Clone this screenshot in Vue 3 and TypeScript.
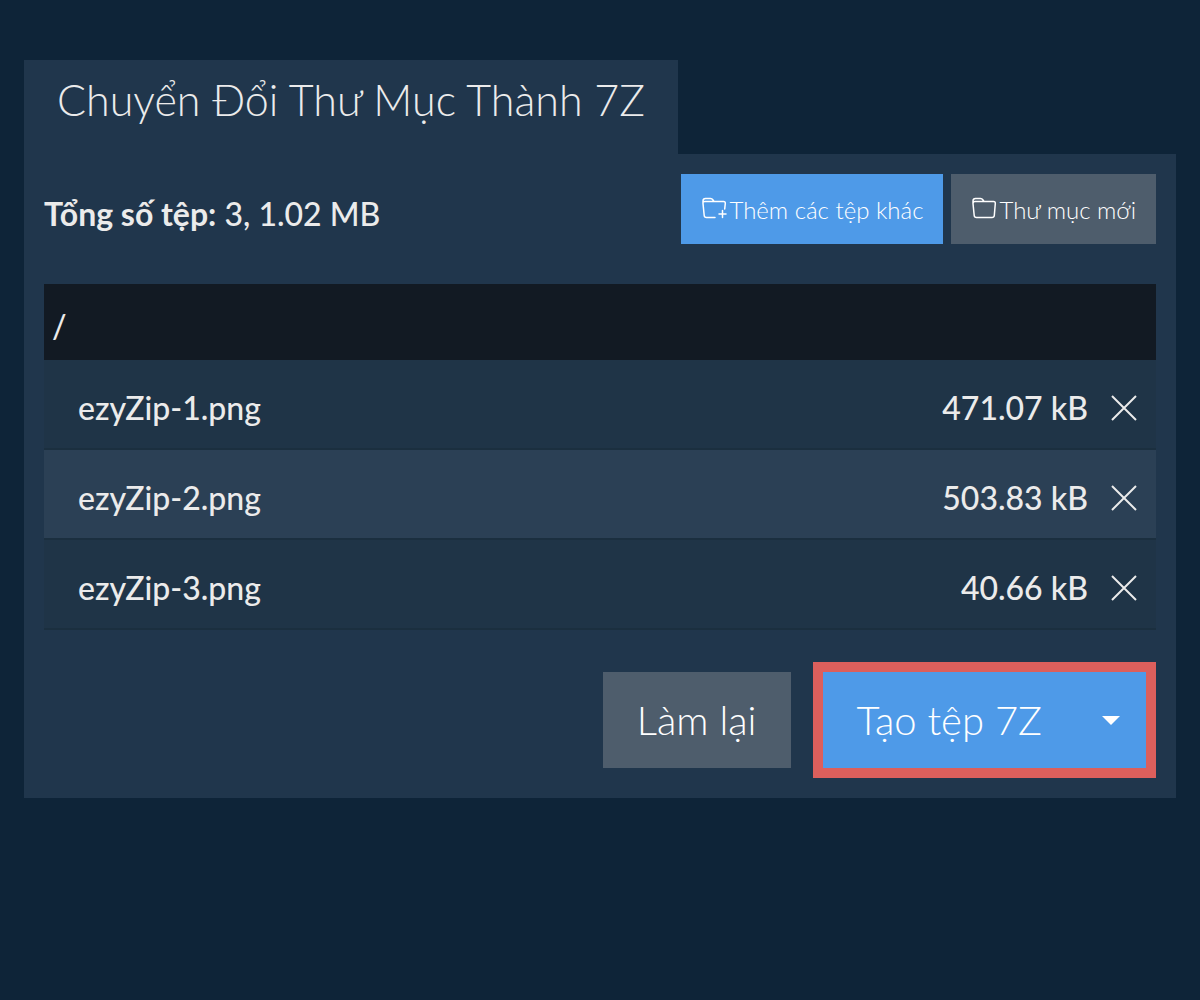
<script setup lang="ts">
import { ref, computed } from 'vue'

interface FileEntry {
  name: string
  size: string
}

const initialFiles: FileEntry[] = [
  { name: 'ezyZip-1.png', size: '471.07 kB' },
  { name: 'ezyZip-2.png', size: '503.83 kB' },
  { name: 'ezyZip-3.png', size: '40.66 kB' },
]

const files = ref<FileEntry[]>([...initialFiles])

const totalSize = computed(() => {
  const kb = files.value.reduce((sum, file) => sum + parseFloat(file.size), 0)
  return `${(kb / 1000).toFixed(2)} MB`
})

function removeFile(name: string) {
  files.value = files.value.filter((file) => file.name !== name)
}

function reset() {
  files.value = []
}
</script>

<template>
  <main class="page">
    <h1 class="tab">Chuyển Đổi Thư Mục Thành 7Z</h1>
    <section class="panel">
      <header class="toolbar">
        <p class="summary"><strong>Tổng số tệp:</strong> {{ files.length }}, {{ totalSize }}</p>
        <div class="tools">
          <button type="button" class="btn small primary">
            <svg class="icon" viewBox="0 0 26 24" aria-hidden="true">
              <path d="M14 20.500H5.500Q3.400 20.500 3.200 18.500L2 6.500V4Q2 1.500 4.500 1.500H9.500Q11 1.500 12 3L13 4.500H22.500Q24.500 4.500 24.300 6.500L23.700 12M2 5Q2.500 4.500 4 4.500H13M21.500 13.500V20.500M18 17H25" />
            </svg>
            <span>Thêm các tệp khác</span>
          </button>
          <button type="button" class="btn small muted">
            <svg class="icon" viewBox="0 0 26 24" aria-hidden="true">
              <path d="M2 6.500V4Q2 1.500 4.500 1.500H9.500Q11 1.500 12 3L13 4.500H22.500Q24.500 4.500 24.300 6.500L23.300 18.500Q23.100 20.500 21 20.500H5.500Q3.400 20.500 3.200 18.500L2 6.500Q2 4.500 4 4.500H13" />
            </svg>
            <span>Thư mục mới</span>
          </button>
        </div>
      </header>

      <table class="files">
        <thead>
          <tr><th colspan="3" scope="colgroup">/</th></tr>
        </thead>
        <tbody>
          <tr v-for="file in files" :key="file.name">
            <td class="name">{{ file.name }}</td>
            <td class="size">{{ file.size }}</td>
            <td class="action">
              <button type="button" class="remove" :aria-label="`Xóa ${file.name}`" @click="removeFile(file.name)">
                <svg viewBox="0 0 24 24" aria-hidden="true"><path d="M0 0L24 24M24 0L0 24" /></svg>
              </button>
            </td>
          </tr>
        </tbody>
      </table>

      <footer class="actions">
        <button type="button" class="btn large muted" @click="reset">Làm lại</button>
        <div class="split">
          <button type="button" class="btn large primary">Tạo tệp 7Z</button>
          <button type="button" class="btn caret primary" aria-label="Tùy chọn khác">
            <svg viewBox="0 0 18 9" aria-hidden="true"><path d="M0 0H18L9 9Z" /></svg>
          </button>
        </div>
      </footer>
    </section>
  </main>
</template>

<style>
body {
  background: #0e2438;
}
</style>

<style scoped>
.page {
  padding: 60px 24px;
  color: #ebebeb;
  font-family: Lato, "Noto Sans", sans-serif;
  font-size: 32px;
  font-weight: 500;
  line-height: 48px;
}

.tab {
  width: fit-content;
  margin: 0;
  padding: 13px 33px 27px;
  background: #20364c;
  font-size: 43px;
  font-weight: 300;
  line-height: 54px;
}

.panel {
  padding: 20px;
  background: #20364c;
}

.toolbar {
  display: flex;
  align-items: center;
  justify-content: space-between;
  margin-bottom: 40px;
}

.summary {
  margin: 0;
  padding-top: 10px;
}

.tools {
  display: flex;
  gap: 8px;
}

.btn {
  display: flex;
  align-items: center;
  justify-content: center;
  border: 0;
  color: #fff;
  font-family: inherit;
  font-weight: 300;
  cursor: pointer;
}

.primary {
  background: #4e9ae8;
}

.muted {
  background: #4e5d6c;
}

.small {
  height: 70px;
  padding: 0 20px;
  gap: 2px;
  font-size: 24px;
}

.large {
  height: 96px;
  padding: 0 34px;
  font-size: 40px;
}

.icon {
  width: 26px;
  height: 24px;
  fill: none;
  stroke: currentColor;
  stroke-width: 1.5;
  stroke-linecap: round;
  stroke-linejoin: round;
}

.files {
  width: 100%;
  border-collapse: separate;
  border-spacing: 0;
}

.files th {
  height: 76px;
  box-sizing: border-box;
  padding: 8px 8px 0;
  background: #121a23;
  font-weight: 500;
  text-align: left;
}

.files td {
  height: 90px;
  box-sizing: border-box;
  padding: 8px 0 0;
  border-bottom: 2px solid #1b2f3f;
  background: #1f3447;
}

.files tbody tr:nth-child(even) td {
  background: #2b4055;
}

.files .name {
  padding-left: 34px;
}

.files .size {
  text-align: right;
}

.files .action {
  width: 68px;
}

.remove {
  display: flex;
  margin-left: 24px;
  padding: 0;
  border: 0;
  background: none;
  color: inherit;
  cursor: pointer;
}

.remove svg {
  width: 24px;
  height: 24px;
  overflow: visible;
  stroke: currentColor;
  stroke-width: 2;
}

.actions {
  display: flex;
  align-items: center;
  justify-content: flex-end;
  gap: 22px;
  margin-top: 32px;
}

.split {
  display: flex;
  border: 10px solid #dc5f5c;
}

.caret {
  padding: 0 26px;
}

.caret svg {
  width: 18px;
  height: 9px;
  fill: currentColor;
}
</style>
